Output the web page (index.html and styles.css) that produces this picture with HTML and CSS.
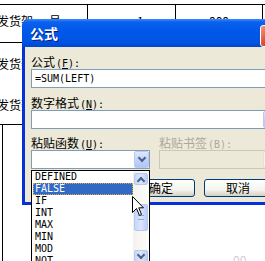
FILE: index.html
```html
<!DOCTYPE html>
<html lang="zh-CN">
<head>
  <meta charset="UTF-8">
  <link rel="stylesheet" href="styles.css">
</head>
<body>
  <!-- 背景里的表格 -->
  <div class="sheet">
    <div class="cell a r1"><span class="cut">发货架</span><span class="gap">号</span><i class="mark"></i></div>
    <div class="cell b r1"><span>1</span><i class="mark"></i></div>
    <div class="cell c r1"><span>000</span><i class="mark"></i></div>
    <div class="cell a r2">
      <div class="cut line">发货架</div>
      <div class="cut line2">发货架</div>
    </div>
    <div class="cell b r2"></div>
    <div class="cell c r2"></div>
  </div>
  <div class="below"><span class="faint">00</span></div>

  <!-- 公式对话框 -->
  <div class="dialog">
    <div class="titlebar">公式<span class="close"></span></div>
    <div class="dlgbody">
      <div class="label">公式<span class="hk">(<u>F</u>):</span></div>
      <div class="field wide mono">=SUM(LEFT)</div>

      <div class="label">数字格式<span class="hk">(<u>N</u>):</span></div>
      <div class="field wide combo"><span class="dd"><i class="chev"></i></span></div>

      <div class="pair">
        <div>
          <div class="label">粘贴函数<span class="hk">(<u>U</u>):</span></div>
          <div class="field short combo"><span class="dd"><i class="chev"></i></span></div>
        </div>
        <div>
          <div class="label off">粘贴书签<span class="hk">(B):</span></div>
          <div class="field bm combo off"><span class="dd off"></span></div>
        </div>
      </div>

      <div class="buttons">
        <div class="btn">确定</div>
        <div class="btn">取消</div>
      </div>
    </div>
  </div>

  <!-- 打开的下拉列表 -->
  <div class="droplist">
    <div class="items mono">
      <div class="item">DEFINED</div>
      <div class="item sel">FALSE</div>
      <div class="item">IF</div>
      <div class="item">INT</div>
      <div class="item">MAX</div>
      <div class="item">MIN</div>
      <div class="item">MOD</div>
      <div class="item">NOT</div>
    </div>
    <div class="scroll">
      <div class="sbtn"><i class="chev up"></i></div>
      <div class="thumb"><i class="grip"></i></div>
      <div class="sbtn"><i class="chev"></i></div>
    </div>
  </div>

  <svg class="cursor" width="13" height="22" viewBox="0 0 13 22">
    <path d="M0.5 0.5 L0.5 16.5 L4.5 12.5 L7.5 19.5 L9.5 18.5 L6.8 11.8 L11.5 11.8 Z" fill="#fff" stroke="#000" stroke-width="1"/>
  </svg>
</body>
</html>
```

FILE: styles.css
```css
body {
  margin: 0;
  width: 265px;
  height: 261px;
  overflow: hidden;
  position: relative;
  background: #fff;
  font-family: "Noto Sans CJK SC", sans-serif;
  font-size: 12px;
  color: #000;
}

.mono {
  font-family: "DejaVu Sans Mono", monospace;
  font-size: 10px;
}

/* 表格 */
.sheet {
  display: grid;
  grid-template-columns: 118px 88px 87px;
  grid-template-rows: 38px 82px;
  margin: 4px 0 0 -30px;
  border-top: 1px solid #000;
}

.cell {
  border-right: 1px solid #000;
  border-bottom: 1px solid #000;
  line-height: 14px;
  white-space: nowrap;
}

.cell.r1 {
  padding-top: 9px;
}

.cell.a {
  padding-left: 27px;
}

.cell.b {
  padding-left: 49px;
}

.cell.c {
  padding-left: 33px;
}

.gap {
  margin-left: 16px;
}

.line {
  margin-top: 14px;
}

.line2 {
  margin-top: 27px;
}

.mark {
  display: inline-block;
  width: 3px;
  height: 3px;
  background: #8c8c8c;
  margin-left: 3px;
  vertical-align: 4px;
}

.below {
  margin-left: 2px;
  height: 140px;
  border-left: 1px solid #000;
  position: relative;
}

.faint {
  position: absolute;
  left: 230px;
  top: 126px;
  color: #d0d0d0;
}

/* 对话框 */
.dialog {
  position: absolute;
  left: 22px;
  top: 19px;
  width: 262px;
  background: #0831d9;
  border-radius: 7px 0 0 0;
}

.titlebar {
  height: 28px;
  background: linear-gradient(#3d8cff 0, #0a60ef 3px, #0058e8 45%, #0054e3 80%, #0046d0 100%);
  border-radius: 7px 0 0 0;
  color: #fff;
  font-weight: bold;
  font-size: 14px;
  line-height: 28px;
  padding-left: 8px;
  text-shadow: 1px 1px #0a1e80;
  position: relative;
}

.close {
  position: absolute;
  left: 238px;
  top: 6px;
  width: 20px;
  height: 20px;
  border: 1px solid #fff;
  border-radius: 3px;
  background: linear-gradient(135deg, #f09a80, #d8502d 50%, #c03a18);
}

.dlgbody {
  margin: 0 3px 3px 3px;
  background: #ece9d8;
  padding: 8px 0 5px 6px;
}

.label {
  height: 13px;
  line-height: 13px;
  margin-bottom: 1px;
  white-space: nowrap;
}

.label.off {
  color: #aca899;
}

.hk {
  font-family: "DejaVu Sans Mono", monospace;
  font-size: 10px;
  margin-left: 1px;
}

.field {
  height: 19px;
  box-sizing: border-box;
  border: 1px solid #7f9db9;
  background: #fff;
  margin-bottom: 8px;
  position: relative;
}

.field.mono {
  line-height: 17px;
  padding-left: 3px;
  font-size: 10px;
}

.wide {
  width: 248px;
}

.short {
  width: 119px;
  margin-bottom: 10px;
}

.bm {
  width: 120px;
  margin-bottom: 10px;
}

.field.off {
  border-color: #c9c7ba;
  background: #ece9d8;
}

.dd {
  position: absolute;
  right: 0;
  top: 0;
  width: 15px;
  height: 17px;
  box-sizing: border-box;
  border: 1px solid #b9c9ef;
  border-radius: 2px;
  background: linear-gradient(#dfe8fd, #c1d3fb 50%, #b2c6f6);
  display: flex;
  align-items: center;
  justify-content: center;
}

.dd.off {
  border-color: #e2e0d6;
  background: #f4f3ee;
}

.chev {
  width: 4px;
  height: 4px;
  border-right: 2px solid #4d6185;
  border-bottom: 2px solid #4d6185;
  transform: rotate(45deg);
  margin-top: -3px;
}

.chev.up {
  transform: rotate(-135deg);
  margin-top: 3px;
}

.pair {
  display: flex;
  gap: 9px;
}

.pair .label {
  margin-top: -1px;
}

.buttons {
  display: flex;
  gap: 9px;
  margin-left: 96px;
}

.btn {
  width: 68px;
  height: 18px;
  box-sizing: border-box;
  border: 1px solid #003c74;
  border-radius: 3px;
  background: linear-gradient(#ffffff, #f4f4f0 60%, #d6d0c5);
  text-align: center;
  line-height: 16px;
  flex: none;
}

/* 下拉列表 */
.droplist {
  position: absolute;
  left: 31px;
  top: 170px;
  width: 119px;
  height: 100px;
  box-sizing: border-box;
  border: 1px solid #000;
  background: #fff;
  display: flex;
}

.items {
  flex: 1;
  padding-left: 1px;
}

.item {
  height: 12px;
  line-height: 12px;
  padding-left: 2px;
}

.item.sel {
  background: #316ac5;
  color: #fff;
  outline: 1px dotted #e8a33c;
  outline-offset: -1px;
}

.scroll {
  width: 16px;
  background: linear-gradient(90deg, #f3f1ec, #fefefb);
  padding-top: 2px;
}

.sbtn,
.thumb {
  width: 14px;
  height: 12px;
  margin-left: 1px;
  box-sizing: border-box;
  border: 1px solid #b8c9f0;
  border-radius: 2px;
  background: linear-gradient(90deg, #c6d6fb, #dbe5fd 50%, #bccef8);
  display: flex;
  align-items: center;
  justify-content: center;
}

.thumb {
  height: 27px;
  margin: 19px 0 19px 1px;
}

.grip {
  width: 6px;
  height: 3px;
  border-top: 1px solid #8fa8e0;
  border-bottom: 1px solid #8fa8e0;
}

.cursor {
  position: absolute;
  left: 132px;
  top: 196px;
}
```
